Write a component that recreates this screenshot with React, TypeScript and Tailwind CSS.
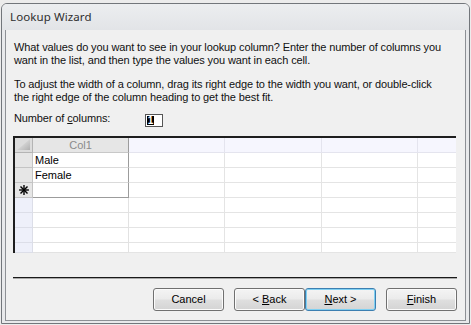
import React from "react";

const font = "font-['Liberation_Sans',Arial,sans-serif]";

const colW = ["w-[96px]", "w-[96px]", "w-[97px]", "w-[96px]"];

function Asterisk() {
  return (
    <svg width="10" height="10" viewBox="0 0 10 10" className="block">
      <g stroke="#000" strokeWidth="1.4" strokeLinecap="square">
        <line x1="5" y1="0.8" x2="5" y2="9.2" />
        <line x1="0.8" y1="5" x2="9.2" y2="5" />
        <line x1="2" y1="2" x2="8" y2="8" />
        <line x1="8" y1="2" x2="2" y2="8" />
      </g>
    </svg>
  );
}

function SelectAll() {
  return (
    <div className="w-[18px] h-full border-r border-b border-[#b4b4b4] bg-[#dcdcdc] flex items-end justify-end p-[2px]">
      <svg width="13" height="11" viewBox="0 0 13 11" className="block">
        <defs>
          <linearGradient id="tri" x1="0" y1="0" x2="1" y2="1">
            <stop offset="0" stopColor="#f4f4f4" />
            <stop offset="1" stopColor="#b0b0b0" />
          </linearGradient>
        </defs>
        <polygon points="13,0 13,11 0,11" fill="url(#tri)" />
      </svg>
    </div>
  );
}

function Row({
  sel,
  c1,
  active,
  last,
  newRow,
  h = "h-[15px]",
}: {
  sel: "grey" | "blue";
  c1?: string;
  active?: boolean;
  last?: boolean;
  newRow?: boolean;
  h?: string;
}) {
  return (
    <div className={`flex ${h}`}>
      <div
        className={`w-[18px] shrink-0 border-r border-b flex items-center justify-center ${
          sel === "grey" ? "bg-[#e6e6e6] border-[#c4c4c4]" : "bg-[#eef0fa] border-[#dcdee8]"
        }`}
      >
        {newRow && <Asterisk />}
      </div>
      <div
        className={`w-[96px] shrink-0 border-r border-b bg-white pl-[2px] flex items-center text-[11px] leading-[13px] text-black ${
          active ? "border-r-[#9c9c9c]" : "border-r-[#e2e2e2]"
        } ${last ? "border-b-[#9c9c9c]" : active ? "border-b-[#dadada]" : "border-b-[#e2e2e2]"}`}
      >
        {c1}
      </div>
      {colW.slice(1).map((w, i) => (
        <div key={i} className={`${w} shrink-0 border-r border-b border-[#e4e4e4] bg-white`} />
      ))}
      <div className="flex-1 border-b border-[#e4e4e4] bg-white" />
    </div>
  );
}

function Btn({
  children,
  focused,
}: {
  children: React.ReactNode;
  focused?: boolean;
}) {
  return (
    <button
      className={`w-[71px] h-[23px] rounded-[3px] border text-[11px] text-black flex items-center justify-center bg-[linear-gradient(#f4f4f4,#ebebeb_48%,#dfdfdf_52%,#d4d4d4)] ${
        focused
          ? "border-[#3c7fb1] shadow-[inset_0_0_0_1px_#7fd0f2]"
          : "border-[#707070] shadow-[inset_0_0_0_1px_#fbfbfb]"
      }`}
    >
      {children}
    </button>
  );
}

export default function App() {
  return (
    <div className={`w-[471px] h-[325px] bg-[#ececec] overflow-hidden pt-[3px] pl-[1px] ${font}`}>
      {/* window */}
      <div className="w-[469px] h-[321px] border border-[#72767b] rounded-t-[6px] bg-[#e8e9eb] flex flex-col">
        {/* title bar */}
        <div className="h-[26px] shrink-0 flex items-center pl-[8px] rounded-t-[5px] bg-[linear-gradient(#eceef0,#e2e4e7)]">
          <span className="font-['Noto_Sans',sans-serif] text-[11.5px] text-[#2e2e2e] tracking-[0.1px]">
            Lookup Wizard
          </span>
        </div>
        {/* frame */}
        <div className="flex-1 px-[3px] pb-[2px] flex">
          <div className="flex-1 border-l border-r border-b border-[#8d9095] bg-[#f0f0f0] flex flex-col">
            {/* intro text */}
            <div className="mt-[11px] pl-[8px] text-[11px] leading-[13px] tracking-[-0.12px] text-[#111] whitespace-nowrap">
              <p>What values do you want to see in your lookup column? Enter the number of columns you</p>
              <p>want in the list, and then type the values you want in each cell.</p>
              <p className="mt-[11px]">
                To adjust the width of a column, drag its right edge to the width you want, or double-click
              </p>
              <p>the right edge of the column heading to get the best fit.</p>
              <div className="mt-[8px] flex items-start h-[15px]">
                <span className="w-[131px] leading-[13px]">
                  Number of <span className="underline">c</span>olumns:
                </span>
                <div className="mt-[2px] w-[18px] h-[13px] border border-[#555] bg-white p-[1px] flex">
                  <div className="w-[7px] h-full bg-black text-white text-[10px] leading-[10px] font-bold flex items-center justify-center">
                    1
                  </div>
                </div>
              </div>
            </div>

            {/* datasheet */}
            <div className="mt-[9px] ml-[7px] w-[443px] h-[117px] border-t-2 border-l-2 border-[#1e1e1e] overflow-hidden flex flex-col">
              <div className="flex h-[15px]">
                <SelectAll />
                <div className="w-[96px] shrink-0 border-r border-b border-r-[#9c9c9c] border-b-[#c8c8c8] bg-[#e6e6e6] flex items-center justify-center text-[11px] text-[#8a8a8a]">
                  Col1
                </div>
                {colW.slice(1).map((w, i) => (
                  <div key={i} className={`${w} shrink-0 border-r border-b border-[#e4e4ee] bg-[#f6f6fe]`} />
                ))}
                <div className="flex-1 border-b border-[#e4e4ee] bg-[#f6f6fe]" />
              </div>
              <Row sel="grey" c1="Male" active />
              <Row sel="grey" c1="Female" active />
              <Row sel="grey" active last newRow />
              <Row sel="blue" />
              <Row sel="blue" />
              <Row sel="blue" />
              <Row sel="blue" h="h-[10px]" />
            </div>

            {/* etched separator */}
            <div className="mt-[24px] ml-[7px] w-[444px] border-t border-b border-t-[#1a1a1a] border-b-[#a9a9a9]" />

            {/* buttons */}
            <div className="mt-[9px] flex justify-end pr-[8px] text-[11px]">
              <Btn>Cancel</Btn>
              <div className="w-[10px]" />
              <Btn>
                &lt;&nbsp;<span className="underline">B</span>ack
              </Btn>
              <Btn focused>
                <span className="underline">N</span>ext&nbsp;&gt;
              </Btn>
              <div className="w-[10px]" />
              <Btn>
                <span className="underline">F</span>inish
              </Btn>
            </div>
          </div>
        </div>
      </div>
    </div>
  );
}
